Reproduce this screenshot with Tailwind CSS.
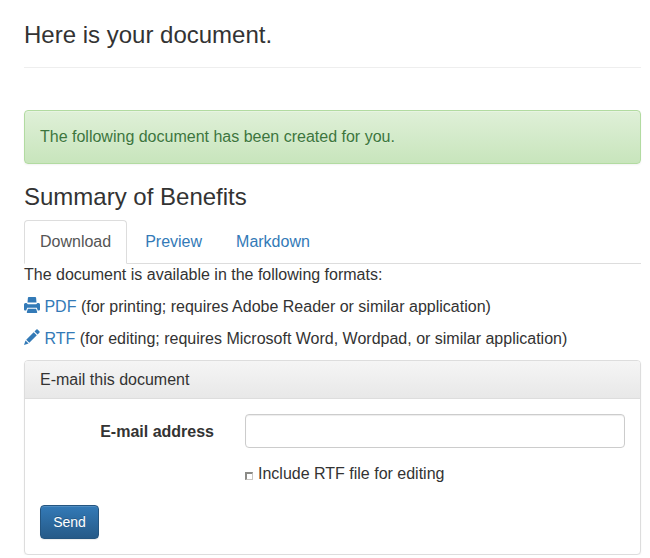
<!DOCTYPE html>
<html lang="en">
<head>
<meta charset="utf-8">
<title>Here is your document.</title>
<script src="https://cdn.jsdelivr.net/npm/@tailwindcss/browser@4"></script>
</head>
<body class="bg-white font-['Liberation_Sans',Arial,sans-serif] text-[16px] leading-[22px] text-[#333] overflow-hidden">
<main class="ml-6 mr-[9px] pt-[22px]">
  <header class="h-[46px] border-b border-[#eee]">
    <h1 class="text-2xl leading-[26px]">Here is your document.</h1>
  </header>
  <div class="mt-[42px] h-[54px] px-[15px] py-[15px] rounded border border-[#b2dba1] bg-linear-to-b from-[#dff0d8] to-[#c8e5bc] text-[#3c763d] shadow-[inset_0_1px_0_rgba(255,255,255,.25),0_1px_2px_rgba(0,0,0,.05)] [text-shadow:0_1px_0_rgba(255,255,255,.2)]">The following document has been created for you.</div>
  <h2 class="mt-5 text-2xl leading-[26px]">Summary of Benefits</h2>
  <nav class="mt-[10px] flex h-11 gap-[2px] border-b border-[#ddd] text-[#337ab7]">
    <a class="h-11 rounded-t border border-b-white border-[#ddd] bg-white px-[15px] py-[10px] text-[#555]">Download</a>
    <a class="h-11 border border-transparent px-[15px] py-[10px]">Preview</a>
    <a class="h-11 border border-transparent px-[15px] py-[10px]">Markdown</a>
  </nav>
  <p>The document is available in the following formats:</p>
  <p class="mt-[10px] flex gap-[4.45px]">
    <svg class="mt-px size-4 shrink-0" viewBox="0 0 16 16" fill="#337ab7"><path d="M4.800 0h6.400q.8 0 .9.800l.4 4.700h-9l.4-4.700Q4 0 4.800 0zM1.500 6h1l1.300 1.300h8.400L13.500 6h1q1.500 0 1.500 1.500v5q0 1-1 1h-1.200l-1-2.800H3.200l-1 2.800H1q-1 0-1-1v-5Q0 6 1.500 6zM3.900 11.800h8.200l1.100 3.300q.2.900-.7.900h-9q-.9 0-.7-.9z"/></svg>
    <span><a class="text-[#337ab7]">PDF</a> (for printing; requires Adobe Reader or similar application)</span>
  </p>
  <p class="mt-[10px] flex gap-[4.45px]">
    <svg class="mt-px size-4 shrink-0" viewBox="0 0 16 16" fill="#337ab7"><path d="M0 16l1.500-4.600 3.100 3.100zM2.200 10.700l7.500-7.500 3.100 3.100-7.500 7.500zM10.500 2.400l1.900-1.900q.6-.6 1.200 0l1.900 1.900q.6.600 0 1.200l-1.900 1.900z"/></svg>
    <span><a class="text-[#337ab7]">RTF</a> (for editing; requires Microsoft Word, Wordpad, or similar application)</span>
  </p>
  <section class="mt-[10px] h-[195px] rounded border border-[#ddd] bg-white shadow-[0_1px_2px_rgba(0,0,0,.05)]">
    <h3 class="h-[38px] rounded-t-[3px] border-b border-[#ddd] bg-linear-to-b from-[#f5f5f5] to-[#e8e8e8] px-[15px] py-[10px] leading-[17.6px]">E-mail this document</h3>
    <form class="px-[15px] pt-[15px]">
      <div class="flex h-[34px]">
        <label for="email" class="w-[174px] pt-[7px] text-right font-bold">E-mail address</label>
        <input id="email" type="email" class="ml-[31px] h-[34px] flex-1 rounded border border-[#ccc] bg-white px-3 shadow-[inset_0_1px_1px_rgba(0,0,0,.075)]">
      </div>
      <label class="ml-[205px] mt-[15px] flex h-[22px] gap-[5px]">
        <input type="checkbox" class="mt-[9px] size-2 appearance-none border-solid border-t-2 border-l-2 border-r border-b border-t-[#8b8b87] border-l-[#8b8b87] border-r-[#c9c6c2] border-b-[#c9c6c2] bg-white">
        <span>Include RTF file for editing</span>
      </label>
      <button type="button" class="mt-5 block h-[34px] w-[59px] rounded border border-[#245580] bg-linear-to-b from-[#337ab7] to-[#265a88] text-sm leading-5 text-white shadow-[inset_0_1px_0_rgba(255,255,255,.15),0_1px_1px_rgba(0,0,0,.075)] [text-shadow:0_-1px_0_rgba(0,0,0,.2)]">Send</button>
    </form>
  </section>
</main>
</body>
</html>
